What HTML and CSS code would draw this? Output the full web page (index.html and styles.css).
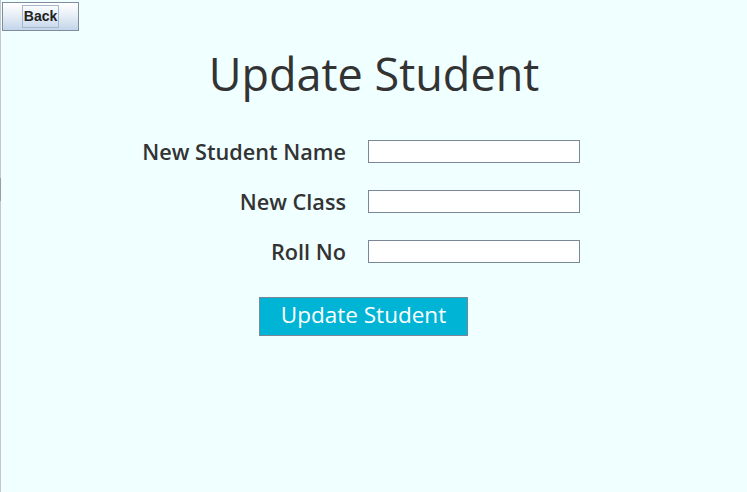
FILE: index.html
```html
<!DOCTYPE html>
<html>
<head>
<meta charset="utf-8">
<link rel="stylesheet" href="styles.css">
</head>
<body>
<div class="frame">
  <div class="toolbar">
    <button class="back"><span class="focus">Back</span></button>
  </div>
  <h1 class="title">Update Student</h1>
  <div class="form">
    <label class="label">New Student Name</label>
    <input class="field" type="text">
    <label class="label">New Class</label>
    <input class="field" type="text">
    <label class="label">Roll No</label>
    <input class="field" type="text">
  </div>
  <div class="actions">
    <button class="submit">Update Student</button>
  </div>
</div>
</body>
</html>
```

FILE: styles.css
```css
html, body {
  margin: 0;
  padding: 0;
  height: 100%;
}
body {
  background: #f0ffff;
  font-family: "Open Sans", "Noto Sans", sans-serif;
  color: #333333;
}
.frame {
  height: 100%;
  box-sizing: border-box;
  border-left: 1px solid #c4c8cc;
  position: relative;
}
.frame::before {
  content: "";
  position: absolute;
  left: -1px;
  top: 178px;
  width: 1px;
  height: 23px;
  background: #9a9ea3;
}
.toolbar {
  padding: 2px 0 0 1px;
  display: flex;
}
.back {
  width: 77px;
  height: 29px;
  box-sizing: border-box;
  border: 1px solid #7f8c99;
  background: linear-gradient(#ffffff 0%, #eef3f9 35%, #c3d5ea 100%);
  display: flex;
  align-items: center;
  justify-content: center;
  padding: 0;
  margin: 0;
}
.back .focus {
  font-family: "Liberation Sans", Arial, sans-serif;
  font-weight: bold;
  font-size: 14px;
  color: #222;
  border: 1px solid #a8b8cc;
  padding: 2px 1px 2px 1px;
  line-height: 17px;
}
.title {
  margin: 15px 0 0 0;
  font-weight: normal;
  font-size: 45px;
  line-height: 56px;
  text-align: center;
  color: #333333;
}
.form {
  display: grid;
  grid-template-columns: 345px 212px;
  column-gap: 22px;
  row-gap: 27px;
  margin-top: 38px;
  align-items: center;
}
.label {
  text-align: right;
  font-weight: 600;
  font-size: 21.7px;
  line-height: 23px;
  color: #333333;
}
.field {
  width: 212px;
  height: 23px;
  box-sizing: border-box;
  border: 1px solid #7a8796;
  background: #ffffff;
  margin: 0;
  padding: 0;
}
.actions {
  padding: 34px 0 0 258px;
}
.submit {
  width: 209px;
  height: 39px;
  box-sizing: border-box;
  background: #00b4d6;
  border: 1px solid #7a8796;
  color: #ffffff;
  font-family: "Open Sans", "Noto Sans", sans-serif;
  font-size: 22.5px;
  padding: 0 0 5px 0;
  margin: 0;
}
```
